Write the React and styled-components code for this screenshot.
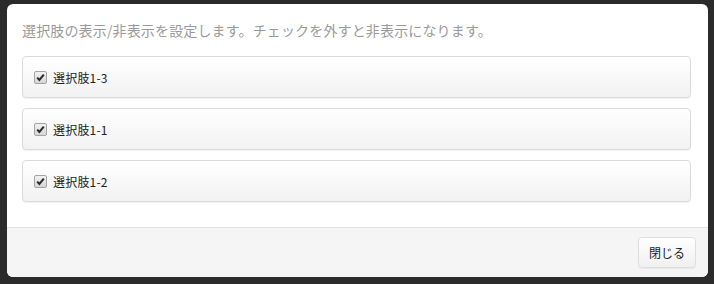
import React from 'react'
import styled, { createGlobalStyle } from 'styled-components'

const GlobalStyle = createGlobalStyle`
  html, body {
    margin: 0;
    padding: 0;
    background: #2b2b2b;
  }
  body {
    font-family: "Noto Sans CJK JP", "Liberation Sans", sans-serif;
  }
`

const Backdrop = styled.div`
  padding: 4px 6px 7px 7px;
  height: 284px;
  box-sizing: border-box;
`

const Modal = styled.div`
  width: 701px;
  height: 273px;
  background: #fff;
  border-radius: 6px;
  display: flex;
  flex-direction: column;
  overflow: hidden;
`

const Body = styled.div`
  flex: 1;
  padding: 16px 17px 0 15px;
`

const Lead = styled.p`
  margin: 0 0 16px;
  font-size: 14px;
  line-height: 20px;
  color: #9a9a9a;
  letter-spacing: 0.15px;
`

const List = styled.div`
  display: flex;
  flex-direction: column;
  gap: 10px;
`

const Item = styled.label`
  height: 42px;
  box-sizing: border-box;
  display: flex;
  align-items: center;
  gap: 6px;
  padding: 0 11px;
  border: 1px solid #dadada;
  border-radius: 4px;
  background: linear-gradient(#ffffff, #f2f2f2);
  box-shadow: 0 1px 1px rgba(0, 0, 0, 0.06);
  font-size: 12px;
  color: #222;
  letter-spacing: 0.2px;
  cursor: pointer;
`

const Box = styled.span`
  width: 11px;
  height: 11px;
  border: 1px solid #a4a4a4;
  border-radius: 2px;
  background: linear-gradient(#f2f2f2, #d6d6d6);
  display: flex;
  align-items: center;
  justify-content: center;
`

const Footer = styled.div`
  height: 50px;
  box-sizing: border-box;
  border-top: 1px solid #e2e2e2;
  background: #f5f5f5;
  display: flex;
  align-items: center;
  justify-content: flex-end;
  padding: 0 12px 0 0;
`

const Button = styled.button`
  width: 58px;
  height: 31px;
  border: 1px solid #dedede;
  border-radius: 4px;
  background: linear-gradient(#ffffff, #f0f0f0);
  box-shadow: 0 1px 1px rgba(0, 0, 0, 0.05);
  font-family: inherit;
  font-size: 12px;
  color: #222;
  padding: 0;
  cursor: pointer;
`

function Check({ checked }) {
  return (
    <Box>
      {checked && (
        <svg width="9" height="9" viewBox="0 0 9 9">
          <path d="M1.2 4.6 L3.4 7 L7.8 1.6" fill="none" stroke="#2a2a2a" strokeWidth="2" />
        </svg>
      )}
    </Box>
  )
}

const options = ['選択肢1-3', '選択肢1-1', '選択肢1-2']

export default function App() {
  return (
    <>
      <GlobalStyle />
      <Backdrop>
        <Modal>
          <Body>
            <Lead>選択肢の表示/非表示を設定します。チェックを外すと非表示になります。</Lead>
            <List>
              {options.map((o) => (
                <Item key={o}>
                  <Check checked />
                  {o}
                </Item>
              ))}
            </List>
          </Body>
          <Footer>
            <Button>閉じる</Button>
          </Footer>
        </Modal>
      </Backdrop>
    </>
  )
}
